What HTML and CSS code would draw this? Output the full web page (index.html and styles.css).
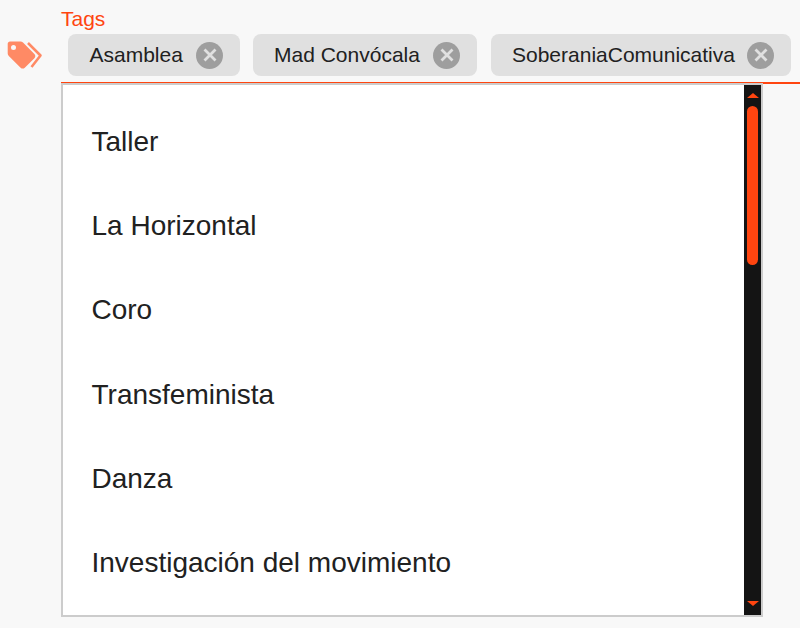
FILE: index.html
```html
<!DOCTYPE html>
<html lang="es">
<head>
<meta charset="utf-8">
<title>Tags</title>
<link rel="stylesheet" href="styles.css">
</head>
<body>
<div class="page">
  <div class="icon-col">
    <svg class="tag-icon" width="36" height="30" viewBox="0 0 36 30">
      <path fill="#ff8a65" fill-rule="evenodd" d="M3 .5h10.500c1 0 1.800.4 2.500 1.100L27.400 13c1.200 1.200 1.200 3 0 4.200L17.800 26.700c-1.200 1.200-3 1.200-4.200 0L1.800 14.900C1.100 14.200.7 13.400.7 12.400V2.800C.7 1.500 1.700.5 3 .5zM6.500 4a2.500 2.500 0 1 0 0 5 2.500 2.500 0 0 0 0-5z"/>
      <path fill="none" stroke="#ff8a65" stroke-width="2.600" stroke-linejoin="round" d="M21 2 33.500 14.500 24.500 26"/>
    </svg>
  </div>
  <div class="field">
    <label class="field-label">Tags</label>
    <div class="chips">
      <span class="chip chip-a">Asamblea <span class="chip-x"><svg width="16" height="16" viewBox="0 0 16 16"><path d="M2.500 2.500l11 11M13.500 2.500l-11 11" stroke="#e0e0e0" stroke-width="2.800"/></svg></span></span>
      <span class="chip chip-b">Mad Convócala <span class="chip-x"><svg width="16" height="16" viewBox="0 0 16 16"><path d="M2.500 2.500l11 11M13.500 2.500l-11 11" stroke="#e0e0e0" stroke-width="2.800"/></svg></span></span>
      <span class="chip chip-c">SoberaniaComunicativa <span class="chip-x"><svg width="16" height="16" viewBox="0 0 16 16"><path d="M2.500 2.500l11 11M13.500 2.500l-11 11" stroke="#e0e0e0" stroke-width="2.800"/></svg></span></span>
    </div>
    <div class="underline"></div>
    <div class="menu">
      <ul class="options">
        <li>Taller</li>
        <li>La Horizontal</li>
        <li>Coro</li>
        <li>Transfeminista</li>
        <li>Danza</li>
        <li>Investigación del movimiento</li>
      </ul>
      <div class="scrollbar">
        <div class="arrow-up"></div>
        <div class="thumb"></div>
        <div class="track-space"></div>
        <div class="arrow-down"></div>
      </div>
    </div>
  </div>
</div>
</body>
</html>
```
FILE: styles.css
```css
html, body {
  margin: 0;
  padding: 0;
  height: 100%;
  overflow: hidden;
  background: #f8f8f8;
}
body {
  font-family: "Liberation Sans", Arial, sans-serif;
  color: #212121;
}
.page {
  display: flex;
  width: 800px;
  height: 628px;
}
.icon-col {
  width: 61px;
  flex: none;
  padding: 41px 0 0 7px;
  box-sizing: border-box;
}
.tag-icon {
  display: block;
}
.field {
  width: 739px;
  flex: none;
  padding-top: 8px;
  box-sizing: border-box;
}
.field-label {
  display: block;
  font-size: 21px;
  line-height: 21px;
  color: #ff4510;
}
.chips {
  display: flex;
  margin: 5px 0 0 7px;
}
.chip {
  display: flex;
  align-items: center;
  justify-content: space-between;
  height: 42px;
  box-sizing: border-box;
  padding: 0 17px 0 21px;
  background: #e0e0e0;
  border-radius: 8px;
  font-size: 21px;
  color: #212121;
  white-space: nowrap;
}
.chip-a { width: 172px; margin-right: 13px; padding-left: 21.500px; }
.chip-b { width: 224px; margin-right: 14px; }
.chip-c { width: 300px; }
.chip-x {
  display: flex;
  align-items: center;
  justify-content: center;
  width: 27px;
  height: 27px;
  border-radius: 50%;
  background: #9e9e9e;
}
.underline {
  height: 2px;
  margin-top: 6px;
  background: #ff4510;
}
.menu {
  position: relative;
  display: flex;
  width: 702px;
  height: 534px;
  margin-top: -1px;
  box-sizing: border-box;
  border: 2px solid #cccccc;
  background: #ffffff;
}
.options {
  flex: 1;
  margin: 0;
  padding: 15px 0 0;
  list-style: none;
}
.options li {
  height: 84.200px;
  line-height: 84.200px;
  padding-left: 28.500px;
  font-size: 28px;
  color: #212121;
}
.scrollbar {
  width: 17px;
  flex: none;
  display: flex;
  flex-direction: column;
  align-items: center;
  background: #141414;
}
.arrow-up {
  width: 0;
  height: 0;
  margin-top: 8px;
  border-left: 6px solid transparent;
  border-right: 6px solid transparent;
  border-bottom: 5px solid #ff4510;
}
.thumb {
  width: 11px;
  height: 159px;
  margin-top: 8px;
  border-radius: 6px;
  background: #ff4510;
}
.track-space {
  flex: 1;
}
.arrow-down {
  width: 0;
  height: 0;
  margin-bottom: 9px;
  border-left: 6px solid transparent;
  border-right: 6px solid transparent;
  border-top: 5px solid #ff4510;
}
```
